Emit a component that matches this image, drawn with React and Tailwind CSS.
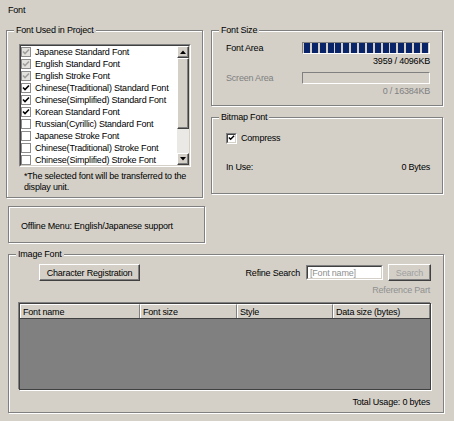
const fonts = [
  { name: "Japanese Standard Font", state: "locked" },
  { name: "English Standard Font", state: "locked" },
  { name: "English Stroke Font", state: "locked" },
  { name: "Chinese(Traditional) Standard Font", state: "on" },
  { name: "Chinese(Simplified) Standard Font", state: "on" },
  { name: "Korean Standard Font", state: "on" },
  { name: "Russian(Cyrillic) Standard Font", state: "off" },
  { name: "Japanese Stroke Font", state: "off" },
  { name: "Chinese(Traditional) Stroke Font", state: "off" },
  { name: "Chinese(Simplified) Stroke Font", state: "off" },
];

const columns = [
  { label: "Font name", w: "w-[120px]" },
  { label: "Font size", w: "w-[97px]" },
  { label: "Style", w: "w-[96px]" },
  { label: "Data size (bytes)", w: "flex-1" },
];

function Check({ color = "#000" }) {
  return (
    <svg width="8" height="8" viewBox="0 0 8 8">
      <path d="M1 3.5 L3 5.5 L7 1.5" fill="none" stroke={color} strokeWidth="1.6" />
    </svg>
  );
}

function Group({ title, className = "", children }) {
  return (
    <div
      className={`relative border border-[#808080] shadow-[inset_1px_1px_0_#fff,1px_1px_0_#fff] ${className}`}
    >
      {title && (
        <span className="absolute -top-[7px] left-[7px] bg-[#d4d0c8] px-[2px] leading-[12px]">
          {title}
        </span>
      )}
      {children}
    </div>
  );
}

function Raised({ className = "", children }) {
  return (
    <div
      className={`flex items-center justify-center border border-t-white border-l-white border-r-[#404040] border-b-[#404040] bg-[#d4d0c8] shadow-[inset_-1px_-1px_0_#808080] ${className}`}
    >
      {children}
    </div>
  );
}

function Arrow({ up }) {
  return (
    <svg width="6" height="4" viewBox="0 0 6 4">
      <path d={up ? "M0 4 L3 0.5 L6 4 Z" : "M0 0 L3 3.5 L6 0 Z"} fill="#000" />
    </svg>
  );
}

function Bar({ filled }) {
  return (
    <div className="flex h-[12px] w-[128px] justify-between border border-t-[#808080] border-l-[#808080] border-r-white border-b-white px-[1px]">
      {filled &&
        Array.from({ length: 16 }).map((_, i) => (
          <div key={i} className="h-full w-[6px] bg-[#0a246a]" />
        ))}
    </div>
  );
}

export default function App() {
  return (
    <div className="h-[421px] w-[454px] overflow-hidden bg-[#d4d0c8] pt-[4px] text-[9px] leading-[12px] tracking-[-0.2px] text-black [font-family:'Liberation_Sans',Arial,sans-serif]">
      <div className="ml-[8px] h-[12px]">Font</div>

      <div className="ml-[6px] mt-[14px] flex">
        <Group title="Font Used in Project" className="h-[168px] w-[197px] pl-[12px] pt-[13px]">
          <div className="h-[123px] w-[172px] border border-t-[#808080] border-l-[#808080] border-r-white border-b-white">
            <div className="flex h-full border border-t-[#404040] border-l-[#404040] border-r-[#d4d0c8] border-b-[#d4d0c8] bg-white">
              <div className="flex-1">
                {fonts.map((f) => (
                  <div key={f.name} className="flex h-[12px] items-center whitespace-nowrap">
                    <div
                      className={`flex h-[10px] w-[10px] items-center justify-center border border-[#8c8c8c] ${
                        f.state === "locked" ? "bg-[#e4e2dd]" : "bg-white"
                      }`}
                    >
                      {f.state === "locked" && <Check color="#a0a0a0" />}
                      {f.state === "on" && <Check />}
                    </div>
                    <span className="ml-[4px]">{f.name}</span>
                  </div>
                ))}
              </div>
              <div className="flex w-[12px] flex-col bg-[#ebe9e5]">
                <Raised className="h-[12px]">
                  <Arrow up />
                </Raised>
                <Raised className="h-[71px]" />
                <div className="flex-1" />
                <Raised className="h-[12px]">
                  <Arrow />
                </Raised>
              </div>
            </div>
          </div>
          <div className="ml-[5px] mt-[4px] leading-[11px]">
            *The selected font will be transferred to the
            <br />
            display unit.
          </div>
        </Group>

        <div className="ml-[8px] flex w-[232px] flex-col">
          <Group title="Font Size" className="h-[76px] pl-[14px] pr-[12px] pt-[11px]">
            <div className="flex items-center justify-between">
              <span>Font Area</span>
              <Bar filled />
            </div>
            <div className="mt-[2px] text-right leading-[11px]">3959 / 4096KB</div>
            <div className="mt-[5px] flex items-center justify-between">
              <span className="text-[#808080]">Screen Area</span>
              <Bar />
            </div>
            <div className="mt-[2px] text-right leading-[11px] text-[#808080]">0 / 16384KB</div>
          </Group>

          <Group title="Bitmap Font" className="mt-[11px] h-[77px] pl-[14px] pr-[12px] pt-[14px]">
            <div className="flex items-center">
              <div className="flex h-[11px] w-[11px] items-center justify-center border border-t-[#808080] border-l-[#808080] border-r-white border-b-white">
                <div className="flex h-full w-full items-center justify-center border border-t-[#404040] border-l-[#404040] border-r-[#d4d0c8] border-b-[#d4d0c8] bg-white">
                  <Check />
                </div>
              </div>
              <span className="ml-[4px]">Compress</span>
            </div>
            <div className="mt-[18px] flex justify-between leading-[11px]">
              <span>In Use:</span>
              <span>0 Bytes</span>
            </div>
          </Group>
        </div>
      </div>

      <Group className="ml-[8px] mt-[8px] h-[37px] w-[197px] pl-[12px] pt-[13px]">
        Offline Menu: English/Japanese support
      </Group>

      <Group title="Image Font" className="ml-[8px] mt-[11px] h-[159px] w-[436px] pl-[10px] pr-[12px] pt-[9px]">
        <div className="flex items-center">
          <Raised className="ml-[20px] h-[17px] w-[101px]">Character Registration</Raised>
          <span className="ml-auto">Refine Search</span>
          <div className="ml-[6px] flex h-[15px] w-[77px] items-center border border-t-[#808080] border-l-[#808080] border-r-white border-b-white">
            <div className="flex h-full w-full items-center border border-t-[#404040] border-l-[#404040] border-r-[#d4d0c8] border-b-[#d4d0c8] bg-white pl-[2px] text-[#909090]">
              [Font name]
            </div>
          </div>
          <Raised className="ml-[5px] h-[17px] w-[43px] text-[#a0a0a0]">Search</Raised>
        </div>
        <div className="mt-[4px] pr-[1px] text-right leading-[11px] text-[#909090]">Reference Part</div>
        <div className="mt-[7px] flex h-[87px] w-[412px] flex-col border border-[#404040] bg-[#808080] shadow-[-1px_-1px_0_#808080,1px_1px_0_#fff]">
          <div className="flex h-[15px] border-b border-[#404040] bg-[#d4d0c8]">
            {columns.map((c) => (
              <div
                key={c.label}
                className={`${c.w} flex items-center border-l border-t border-r border-l-white border-t-white border-r-[#808080] pl-[2px]`}
              >
                {c.label}
              </div>
            ))}
          </div>
        </div>
        <div className="mt-[7px] pr-[1px] text-right leading-[11px]">Total Usage: 0 bytes</div>
      </Group>
    </div>
  );
}
